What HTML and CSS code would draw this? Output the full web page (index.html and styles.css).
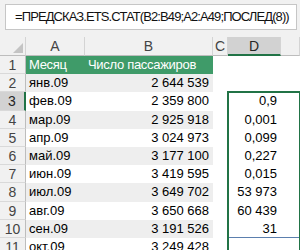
FILE: index.html
```html
<!DOCTYPE html>
<html lang="ru">
<head>
<meta charset="utf-8">
<title>Прогноз пассажиропотока</title>
<link rel="stylesheet" href="styles.css">
</head>
<body>
<div class="formula-bar">
  <div class="formula">=ПРЕДСКАЗ.ETS.СТАТ(B2:B49;A2:A49;ПОСЛЕД(8))</div>
</div>

<div class="sheet">
  <!-- column headers -->
  <div class="corner"></div>
  <div class="colhead">A</div>
  <div class="colhead">B</div>
  <div class="colhead left">C</div>
  <div class="colhead active">D</div>
  <div class="colhead"></div>

  <!-- row 1: table header -->
  <div class="rowhead">1</div>
  <div class="cell th">Месяц</div>
  <div class="cell th">Число пассажиров</div>
  <div class="cell"></div><div class="cell"></div><div class="cell"></div>

  <div class="rowhead">2</div>
  <div class="cell band">янв.09</div>
  <div class="cell band num">2 644 539</div>
  <div class="cell"></div><div class="cell"></div><div class="cell"></div>

  <div class="rowhead active">3</div>
  <div class="cell">фев.09</div>
  <div class="cell num">2 359 800</div>
  <div class="cell"></div><div class="cell num">0,9</div><div class="cell"></div>

  <div class="rowhead">4</div>
  <div class="cell band">мар.09</div>
  <div class="cell band num">2 925 918</div>
  <div class="cell"></div><div class="cell num">0,001</div><div class="cell"></div>

  <div class="rowhead">5</div>
  <div class="cell">апр.09</div>
  <div class="cell num">3 024 973</div>
  <div class="cell"></div><div class="cell num">0,099</div><div class="cell"></div>

  <div class="rowhead">6</div>
  <div class="cell band">май.09</div>
  <div class="cell band num">3 177 100</div>
  <div class="cell"></div><div class="cell num">0,227</div><div class="cell"></div>

  <div class="rowhead">7</div>
  <div class="cell">июн.09</div>
  <div class="cell num">3 419 595</div>
  <div class="cell"></div><div class="cell num">0,015</div><div class="cell"></div>

  <div class="rowhead">8</div>
  <div class="cell band">июл.09</div>
  <div class="cell band num">3 649 702</div>
  <div class="cell"></div><div class="cell num">53 973</div><div class="cell"></div>

  <div class="rowhead">9</div>
  <div class="cell">авг.09</div>
  <div class="cell num">3 650 668</div>
  <div class="cell"></div><div class="cell num">60 439</div><div class="cell"></div>

  <div class="rowhead">10</div>
  <div class="cell band">сен.09</div>
  <div class="cell band num">3 191 526</div>
  <div class="cell"></div><div class="cell num">31</div><div class="cell"></div>

  <div class="rowhead">11</div>
  <div class="cell">окт.09</div>
  <div class="cell num">3 249 428</div>
  <div class="cell"></div><div class="cell"></div><div class="cell"></div>

  <!-- spill range outline and active cell -->
  <div class="spill"></div>
  <div class="selection"><span class="handle"></span></div>
</div>
</body>
</html>
```

FILE: styles.css
```css
html, body {
  margin: 0;
  padding: 0;
}

body {
  width: 300px;
  height: 250px;
  overflow: hidden;
  background: #f1f1f1;
  font-family: "Liberation Sans", Arial, sans-serif;
  color: #000;
}

.formula-bar {
  height: 37px;
  padding: 4px 3px 0 5px;
  box-sizing: border-box;
}

.formula {
  height: 26px;
  box-sizing: border-box;
  border: 1px solid #c6c6c6;
  background: #fff;
  padding-left: 9px;
  font-size: 13px;
  letter-spacing: -0.9px;
  line-height: 24px;
  white-space: nowrap;
  overflow: hidden;
  color: #111;
}

.sheet {
  position: relative;
  display: grid;
  grid-template-columns: 26px 59px 128px 15px 53px 1fr;
  grid-template-rows: 19px repeat(11, 18.2px);
  background: #fff;
}

.corner {
  position: relative;
  background: #f1f1f1;
  border-right: 1px solid #d4d4d4;
  border-bottom: 1px solid #bdbdbd;
}

.corner::after {
  content: "";
  position: absolute;
  right: 2px;
  bottom: 2px;
  width: 0;
  height: 0;
  border-left: 10px solid transparent;
  border-bottom: 10px solid #c4c4c4;
}

.colhead {
  background: #f1f1f1;
  border-right: 1px solid #d4d4d4;
  border-bottom: 1px solid #bdbdbd;
  color: #444;
  font-size: 14px;
  line-height: 19px;
  text-align: center;
}

.colhead.left {
  text-align: left;
  padding-left: 2px;
}

.colhead.active {
  background: #d2d2d2;
  border-bottom: 2px solid #217346;
  color: #262626;
}

.rowhead {
  background: #f1f1f1;
  border-right: 1px solid #bdbdbd;
  border-bottom: 1px solid #d9d9d9;
  color: #444;
  font-size: 14px;
  line-height: 18px;
  text-align: center;
  box-sizing: border-box;
}

.rowhead.active {
  background: #d2d2d2;
  border-right: 2px solid #217346;
  color: #262626;
}

.cell {
  font-size: 13px;
  line-height: 18px;
  padding: 0 3px;
  white-space: nowrap;
  overflow: hidden;
}

.cell.num {
  text-align: right;
  padding-right: 4px;
}

.cell.th {
  background: #3f9b69;
  color: #fff;
  letter-spacing: -0.3px;
}

.cell.band {
  background: #eeeeee;
}

/* dynamic array spill range D3:D10 */
.spill {
  position: absolute;
  grid-column: 5;
  grid-row: 4 / 12;
  inset: 0;
  border: 1px solid #5b7fae;
  pointer-events: none;
}

/* active cell D3 */
.selection {
  position: absolute;
  grid-column: 5;
  grid-row: 4;
  inset: -1px;
  border: 2px solid #217346;
}

.handle {
  position: absolute;
  right: -4px;
  bottom: -4px;
  width: 5px;
  height: 5px;
  background: #217346;
  border: 1px solid #fff;
}
```
